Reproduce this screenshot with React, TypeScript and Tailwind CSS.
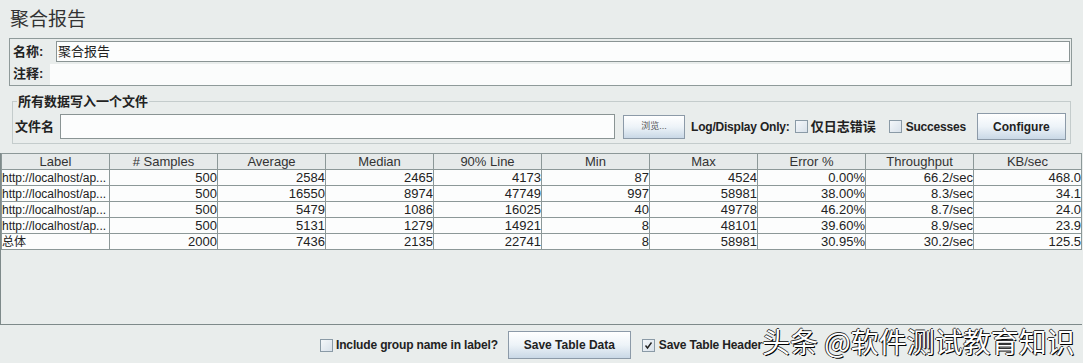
import React from "react";

const font = "'Liberation Sans', 'Noto Sans CJK SC', Arial, sans-serif";

const cols = ["Label", "# Samples", "Average", "Median", "90% Line", "Min", "Max", "Error %", "Throughput", "KB/sec"];

const rows = [
  ["http://localhost/ap...", "500", "2584", "2465", "4173", "87", "4524", "0.00%", "66.2/sec", "468.0"],
  ["http://localhost/ap...", "500", "16550", "8974", "47749", "997", "58981", "38.00%", "8.3/sec", "34.1"],
  ["http://localhost/ap...", "500", "5479", "1086", "16025", "40", "49778", "46.20%", "8.7/sec", "24.0"],
  ["http://localhost/ap...", "500", "5131", "1279", "14921", "8", "48101", "39.60%", "8.9/sec", "23.9"],
  ["总体", "2000", "7436", "2135", "22741", "8", "58981", "30.95%", "30.2/sec", "125.5"],
];

function Check({ checked = false }: { checked?: boolean }) {
  return (
    <span className="w-[13px] h-[13px] border border-[#8a9aa6] bg-gradient-to-br from-[#f4f7fa] to-[#d8e1ea] flex items-center justify-center shrink-0">
      {checked && (
        <svg width="9" height="9" viewBox="0 0 9 9">
          <path d="M1.5 4.5 L3.5 7 L7.5 1.5" stroke="#222" strokeWidth="1.4" fill="none" />
        </svg>
      )}
    </span>
  );
}

function Btn({ children, className = "" }: { children: React.ReactNode; className?: string }) {
  return (
    <div className={`shrink-0 whitespace-nowrap border border-[#8c9aa8] bg-gradient-to-b from-[#ffffff] via-[#edf3f8] to-[#c9d8e6] flex items-center justify-center ${className}`}>
      {children}
    </div>
  );
}

export default function App() {
  return (
    <div className="w-[1083px] h-[363px] bg-[#e9edec] overflow-hidden relative text-[#222]" style={{ fontFamily: font }}>
      <div className="pl-[10px] pt-[8px] h-[38px] text-[19px] leading-[24px] text-[#333]">聚合报告</div>

      {/* name / comment panel */}
      <div className="ml-[9px] w-[1063px] h-[48px] border border-[#8f9a9a] flex flex-col pt-[2px]">
        <div className="flex items-center h-[21px]">
          <span className="w-[46px] pl-[3px] text-[13px] font-bold">名称:</span>
          <div className="flex-1 h-[21px] mr-[1px] border border-[#8a9494] bg-[#fcfdfd] text-[13px] leading-[19px] pl-[1px]">聚合报告</div>
        </div>
        <div className="flex items-center h-[22px] mt-[1px]">
          <span className="w-[40px] pl-[3px] text-[13px] font-bold">注释:</span>
          <div className="flex-1 h-[21px] mr-[1px] bg-[#fbfcfc]" />
        </div>
      </div>

      {/* file panel */}
      <fieldset className="ml-[12px] mt-[8px] w-[1059px] h-[50px] border border-[#c4cccc] px-[2px]">
        <legend className="ml-[2px] px-[1px] text-[13px] font-bold leading-[15px]">所有数据写入一个文件</legend>
        <div className="flex items-center mt-[4px] h-[27px] whitespace-nowrap">
          <span className="w-[45px] shrink-0 text-[13px] font-bold">文件名</span>
          <div className="w-[555px] shrink-0 h-[25px] border border-[#8a9494] bg-[#fcfdfd]" />
          <Btn className="ml-[8px] w-[62px] h-[24px] text-[9px] text-[#555]">浏览...</Btn>
          <span className="ml-[6px] text-[12px] font-bold tracking-[-0.2px]">Log/Display Only:</span>
          <span className="ml-[5px]"><Check /></span>
          <span className="ml-[3px] text-[13px] font-bold">仅日志错误</span>
          <span className="ml-[13px]"><Check /></span>
          <span className="ml-[4px] text-[12px] font-bold tracking-[-0.2px]">Successes</span>
          <Btn className="ml-[11px] w-[89px] h-[27px] text-[12px] font-bold">Configure</Btn>
        </div>
      </fieldset>

      {/* table */}
      <div className="mt-[9px] w-[1082px] h-[172px] border-l border-b border-[#7e8a8a]">
        <table className="w-[1081px] table-fixed border-collapse text-[12px]">
          <thead>
            <tr className="h-[16px]">
              {cols.map((c) => (
                <th key={c} className="border border-[#8c9898] bg-[#e6eaea] font-normal text-[13px] leading-[14px] text-[#333] text-center p-0">{c}</th>
              ))}
            </tr>
          </thead>
          <tbody>
            {rows.map((r, i) => (
              <tr key={i} className="h-[16px]">
                {r.map((v, j) => (
                  <td key={j} className={`border border-[#8c9898] bg-[#fcfdfd] p-0 leading-[14px] whitespace-nowrap overflow-hidden ${j === 0 ? "text-left text-[12px]" : "text-right text-[13px]"}`}>{v}</td>
                ))}
              </tr>
            ))}
          </tbody>
        </table>
      </div>

      {/* bottom bar */}
      <div className="flex items-center h-[40px] pl-[320px] whitespace-nowrap">
        <Check />
        <span className="ml-[3px] text-[12px] font-bold tracking-[-0.15px]">Include group name in label?</span>
        <Btn className="ml-[10px] w-[123px] h-[28px] text-[12px] font-bold">Save Table Data</Btn>
        <span className="ml-[11px]"><Check checked /></span>
        <span className="ml-[4px] text-[12px] font-bold tracking-[-0.15px]">Save Table Header</span>
      </div>

      {/* watermark */}
      <div
        className="absolute left-[762px] top-[325px] text-[28px] leading-[32px] text-white whitespace-nowrap"
        style={{ fontFamily: "'Noto Sans CJK SC', sans-serif", textShadow: "1px 1px 0 #000, -1px 0 0 #333, 0 -1px 0 #333" }}
      >
        头条 @软件测试教育知识
      </div>
    </div>
  );
}
